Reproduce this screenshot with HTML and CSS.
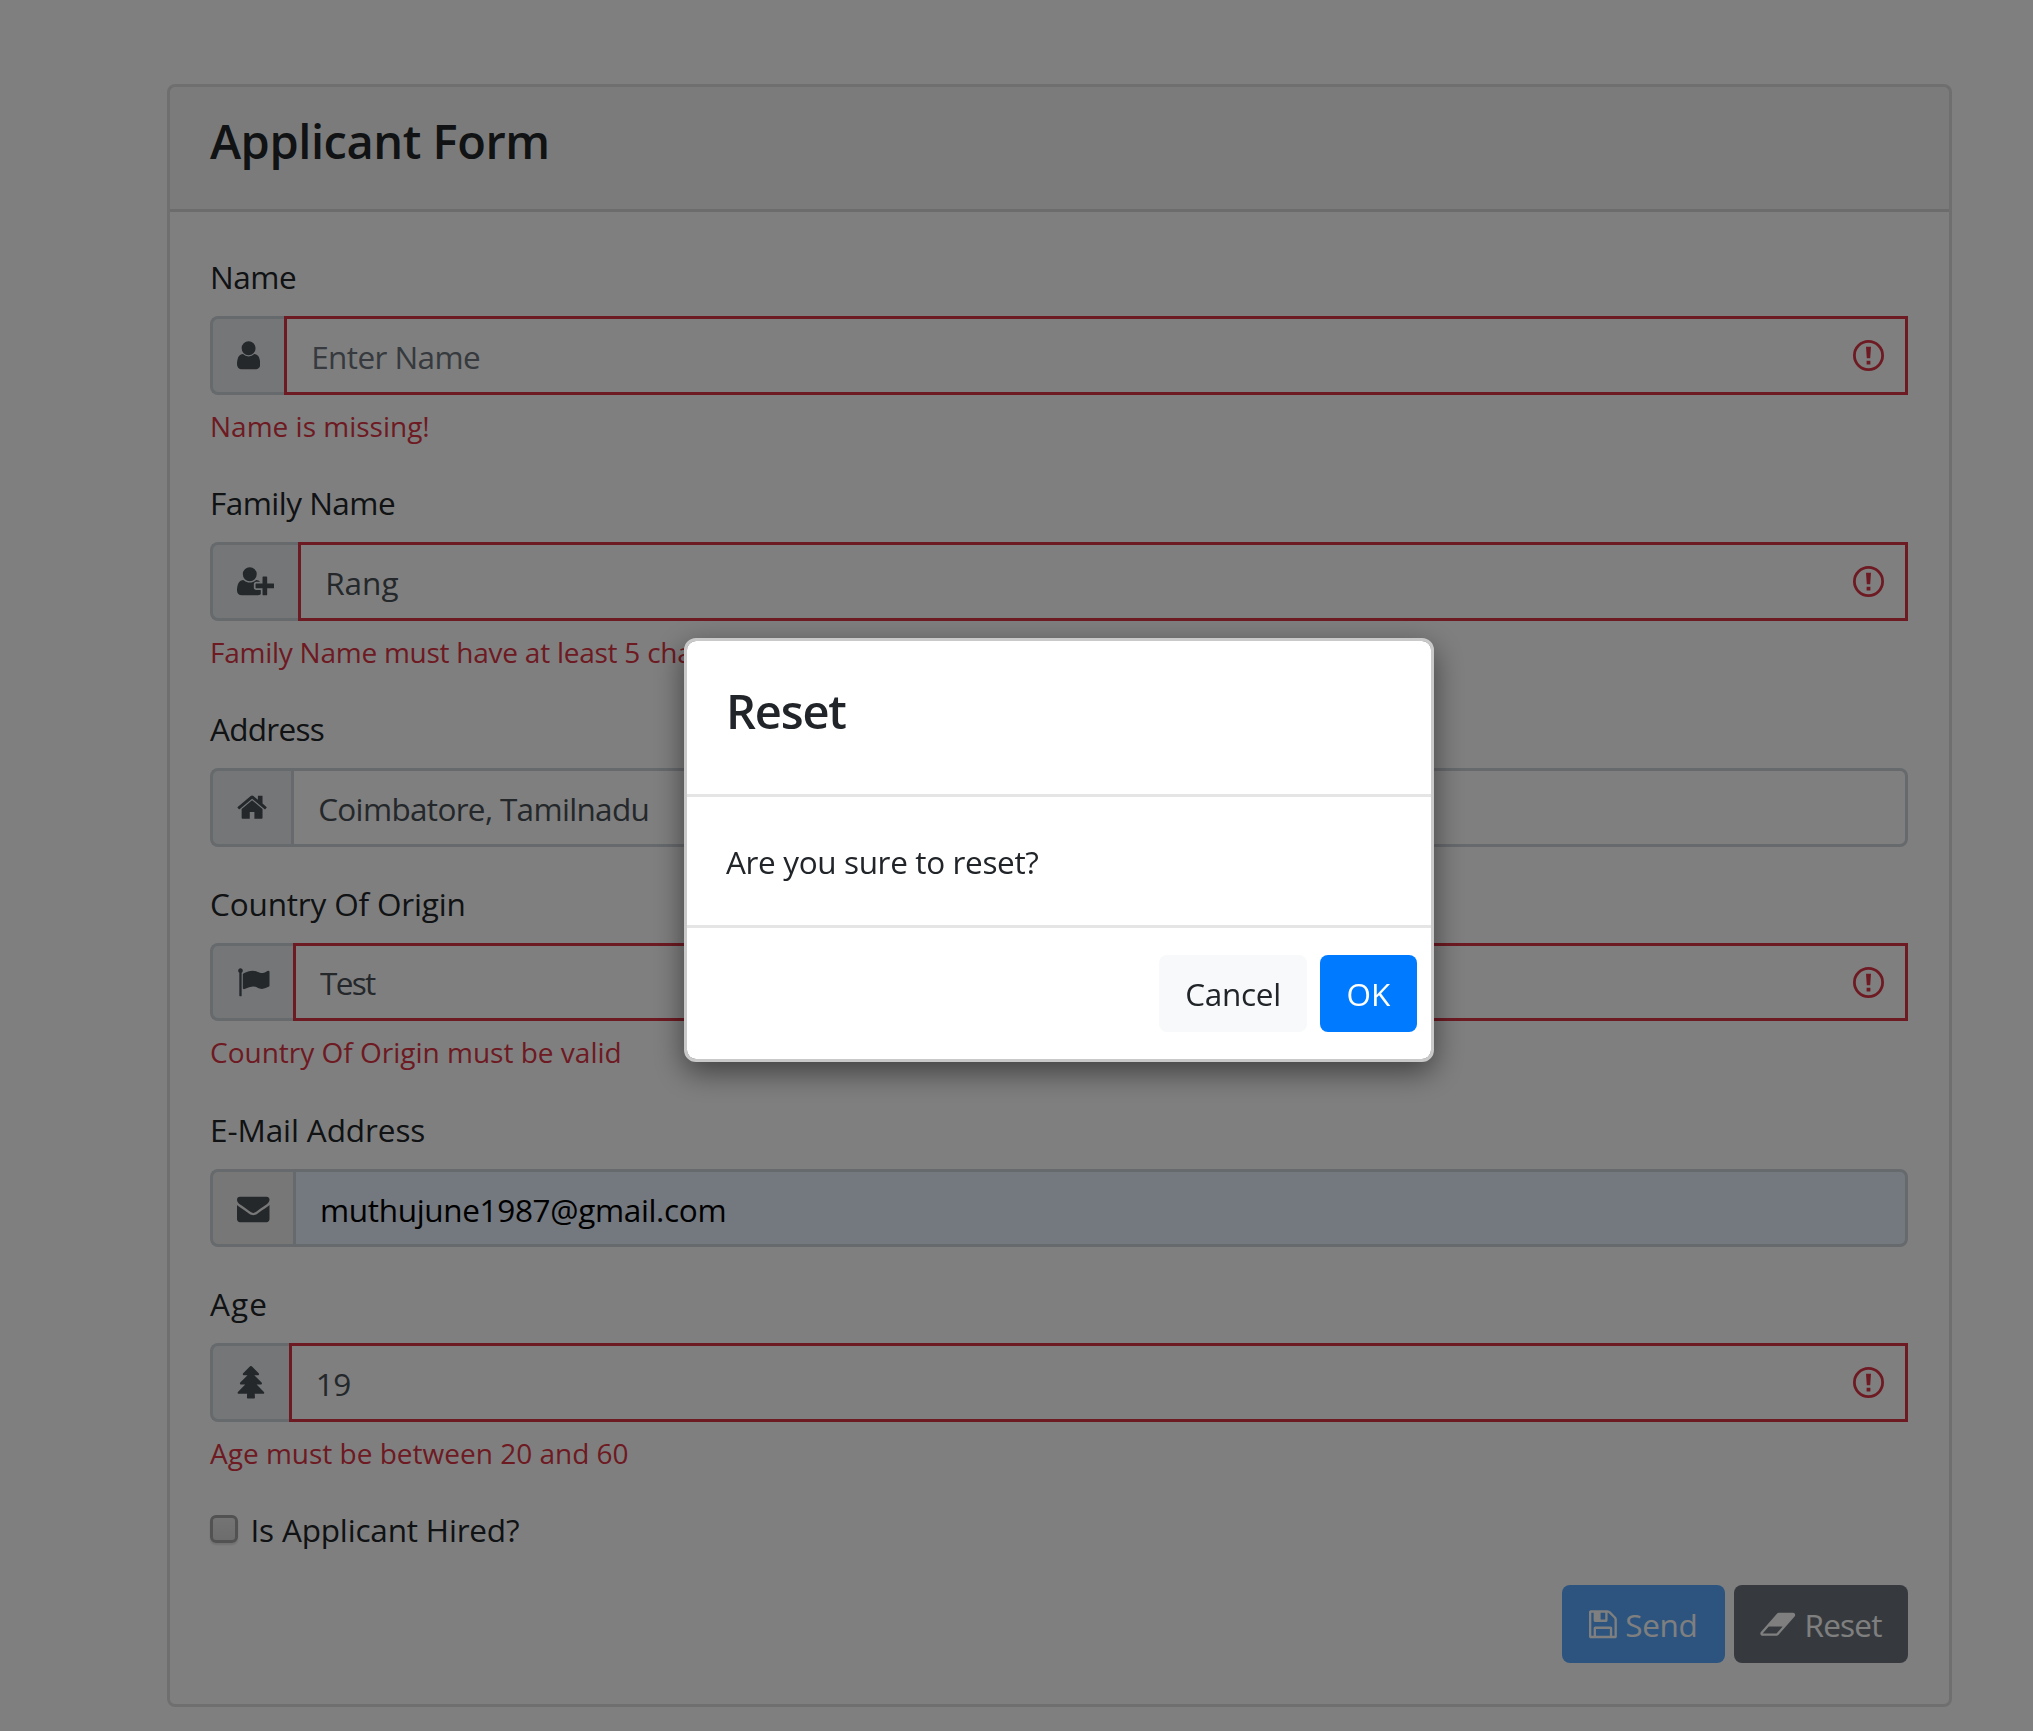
FILE: index.html
```html
<!DOCTYPE html>
<html lang="en">
<head>
<meta charset="utf-8">
<title>Applicant Form</title>
<link rel="stylesheet" href="styles.css">
</head>
<body>
<svg class="sprite" aria-hidden="true">
  <symbol id="alert" viewBox="0 0 31 31"><circle cx="15.5" cy="15.5" r="14.1" fill="none" stroke="currentColor" stroke-width="2.8"/><path fill="currentColor" d="M13 6.7h5l-.8 11.6h-3.4zM13.6 20.8h3.8v3.6h-3.8z"/></symbol>
</svg>
<main class="card">
  <header class="card-header"><h2 class="card-title">Applicant Form</h2></header>
  <form class="card-body">
    <div class="form-group">
      <label class="label t-name" for="name">Name</label>
      <div class="input-group invalid">
        <span class="addon"><svg class="icon" viewBox="256 0 1280 1792"><path d="M1536 1399q0 109-62.5 187t-150.5 78h-854q-88 0-150.5-78t-62.5-187q0-85 8.5-160.5t31.5-152 58.5-131 94-89 134.5-34.5q131 128 313 128t313-128q76 0 134.5 34.5t94 89 58.5 131 31.5 152 8.5 160.5zm-256-887q0 159-112.5 271.5t-271.5 112.5-271.5-112.5-112.5-271.5 112.5-271.5 271.5-112.5 271.5 112.5 112.5 271.5z"/></svg></span>
        <input class="control t-enter" id="name" type="text" placeholder="Enter Name">
        <svg class="alert"><use href="#alert"/></svg>
      </div>
      <div class="feedback">Name is missing!</div>
    </div>
    <div class="form-group">
      <label class="label t-family" for="family">Family Name</label>
      <div class="input-group invalid">
        <span class="addon"><svg class="icon" viewBox="0 0 2048 1792"><path d="M704 896q-159 0-271.5-112.5t-112.5-271.5 112.5-271.5 271.5-112.5 271.5 112.5 112.5 271.5-112.5 271.5-271.5 112.5zm960 128h352q13 0 22.5 9.5t9.5 22.5v192q0 13-9.5 22.5t-22.5 9.5h-352v352q0 13-9.5 22.5t-22.5 9.5h-192q-13 0-22.5-9.5t-9.5-22.5v-352h-352q-13 0-22.5-9.5t-9.5-22.5v-192q0-13 9.5-22.5t22.5-9.5h352v-352q0-13 9.5-22.5t22.5-9.5h192q13 0 22.5 9.5t9.5 22.5v352zm-736 224q0 52 38 90t90 38h256v238q-68 50-171 50h-874q-121 0-194-69t-73-190q0-53 3.5-103.5t14-109 26.5-108.5 43-97.5 62-81 85.5-53.5 111.5-20q19 0 39 17 79 61 154.5 91.5t164.5 30.5 164.5-30.5 154.5-91.5q20-17 39-17 132 0 217 96h-223q-52 0-90 38t-38 90v192z"/></svg></span>
        <input class="control t-rang" id="family" type="text" value="Rang">
        <svg class="alert"><use href="#alert"/></svg>
      </div>
      <div class="feedback t-length">Family Name must have at least 5 characters</div>
    </div>
    <div class="form-group">
      <label class="label t-address" for="address">Address</label>
      <div class="input-group">
        <span class="addon"><svg class="icon" viewBox="64 0 1664 1792"><path d="M1472 992v480q0 26-19 45t-45 19h-384v-384h-256v384h-384q-26 0-45-19t-19-45v-480q0-1 .5-3t.5-3l575-474 575 474q1 2 1 6zm223-69l-62 74q-8 9-21 11h-3q-13 0-21-7l-692-577-692 577q-12 8-24 7-13-2-21-11l-62-74q-8-10-7-23.5t11-21.5l719-599q32-26 76-26t76 26l244 204v-195q0-14 9-23t23-9h192q14 0 23 9t9 23v408l219 182q10 8 11 21.5t-7 23.5z"/></svg></span>
        <input class="control t-city" id="address" type="text" value="Coimbatore, Tamilnadu">
      </div>
    </div>
    <div class="form-group">
      <label class="label t-country" for="country">Country Of Origin</label>
      <div class="input-group invalid">
        <span class="addon addon-wide"><svg class="icon" viewBox="0 0 1792 1792"><path d="M320 256q0 72-64 110v1266q0 13-9.5 22.5t-22.5 9.5h-64q-13 0-22.5-9.5t-9.5-22.5v-1266q-64-38-64-110 0-53 37.5-90.5t90.5-37.5 90.5 37.5 37.5 90.5zm1472 64v763q0 25-12.5 38.5t-39.5 27.5q-215 116-369 116-61 0-123.5-22t-108.5-48-115.5-48-142.5-22q-192 0-464 146-17 9-33 9-26 0-45-19t-19-45v-742q0-32 31-55 21-14 79-43 236-120 421-120 107 0 200 29t219 88q38 19 88 19 54 0 117.5-21t110-47 88-47 54.5-21q26 0 45 19t19 45z"/></svg></span>
        <input class="control t-test" id="country" type="text" value="Test">
        <svg class="alert"><use href="#alert"/></svg>
      </div>
      <div class="feedback">Country Of Origin must be valid</div>
    </div>
    <div class="form-group">
      <label class="label t-mail" for="email">E-Mail Address</label>
      <div class="input-group">
        <span class="addon addon-wide addon-plain"><svg class="icon" viewBox="0 0 1792 1792"><path d="M1792 710v794q0 66-47 113t-113 47h-1472q-66 0-113-47t-47-113v-794q44 49 101 87 362 246 497 345 57 42 92.5 65.5t94.5 48 110 24.5h2q51 0 110-24.5t94.5-48 92.5-65.5q170-123 498-345 57-39 100-87zm0-294q0 79-49 151t-122 123q-376 261-468 325-10 7-42.5 31t-54 38.5-52 32.5-57.5 27-50 9h-2q-23 0-50-9t-57.5-27-52-32.5-54-38.5-42.5-31q-91-64-262-182.5t-205-142.5q-62-42-117-115.5t-55-136.5q0-78 41.5-130t118.5-52h1472q65 0 112.5 47t47.5 113z"/></svg></span>
        <input class="control autofilled t-email" id="email" type="text" value="muthujune1987@gmail.com">
      </div>
    </div>
    <div class="form-group">
      <label class="label t-age" for="age">Age</label>
      <div class="input-group invalid">
        <span class="addon"><svg class="icon" viewBox="0 0 1536 1792"><path d="M1504 1472q0 26-19 45t-45 19h-462q1 17 6 87.5t5 108.5q0 25-18 42.5t-43 17.5h-320q-25 0-43-17.5t-18-42.5q0-38 5-108.5t6-87.5h-462q-26 0-45-19t-19-45 19-45l402-403h-229q-26 0-45-19t-19-45 19-45l402-403h-197q-26 0-45-19t-19-45 19-45l384-384q19-19 45-19t45 19l384 384q19 19 19 45t-19 45-45 19h-197l402 403q19 19 19 45t-19 45-45 19h-229l402 403q19 19 19 45z"/></svg></span>
        <input class="control t-num" id="age" type="text" value="19">
        <svg class="alert"><use href="#alert"/></svg>
      </div>
      <div class="feedback">Age must be between 20 and 60</div>
    </div>
    <div class="check-row">
      <input class="check" id="hired" type="checkbox">
      <label class="check-label" for="hired">Is Applicant Hired?</label>
    </div>
    <div class="actions">
      <button class="btn btn-send" type="button" disabled><svg class="icon" viewBox="128 0 1536 1792"><path d="M512 1536h768v-384h-768v384zm896 0h128v-896q0-14-10-38.5t-20-34.5l-281-281q-10-10-34-20t-39-10v416q0 40-28 68t-68 28h-576q-40 0-68-28t-28-68v-416h-128v1280h128v-416q0-40 28-68t68-28h832q40 0 68 28t28 68v416zm-384-928v-320q0-13-9.5-22.5t-22.5-9.5h-192q-13 0-22.5 9.5t-9.5 22.5v320q0 13 9.5 22.5t22.5 9.5h192q13 0 22.5-9.5t9.5-22.5zm640 32v928q0 40-28 68t-68 28h-1344q-40 0-68-28t-28-68v-1344q0-40 28-68t68-28h928q40 0 88 20t76 48l280 280q28 28 48 76t20 88z"/></svg><span class="btn-text t-send">Send</span></button>
      <button class="btn btn-reset" type="button"><svg class="icon" viewBox="0 0 2048 1792"><path d="M1024 1408l336-384h-768l-336 384h768zm1013-1077q15 34 9.5 71.5t-30.5 65.5l-896 1024q-38 44-96 44h-768q-38 0-69.5-20.5t-47.5-54.5q-15-34-9.5-71.5t30.5-65.5l896-1024q38-44 96-44h768q38 0 69.5 20.5t47.5 54.5z"/></svg><span class="btn-text t-reset">Reset</span></button>
    </div>
  </form>
</main>
<div class="backdrop">
  <section class="modal" role="dialog">
    <header class="modal-header"><h2 class="modal-title">Reset</h2></header>
    <p class="modal-body">Are you sure to reset?</p>
    <footer class="modal-footer">
      <button class="btn btn-cancel" type="button">Cancel</button>
      <button class="btn btn-ok" type="button">OK</button>
    </footer>
  </section>
</div>
</body>
</html>
```
FILE: styles.css
```css
* { box-sizing: border-box; }
html { overflow: hidden; }
body {
  margin: 0;
  padding: 84px 81px 24px 167px;
  background: #fff;
  color: #212529;
  font: 400 31.5px/49px "Open Sans", "Noto Sans", sans-serif;
  height: 1731px;
}
h2, p { margin: 0; font-weight: 600; }
.sprite { display: none; }

/* Card */
.card {
  width: 1785px;
  height: 1623px;
  border: 3px solid rgba(0, 0, 0, .125);
  border-radius: 8px;
}
.card-header {
  height: 125px;
  padding: 25px 40px 0;
  background: rgba(0, 0, 0, .03);
  border-bottom: 3px solid rgba(0, 0, 0, .125);
}
.card-title, .modal-title {
  font-size: 47px;
  line-height: 59px;
  letter-spacing: -.45px;
}
.card-body { padding: 39.9px 41px 0 40px; }

/* Fields */
.form-group { margin-bottom: 31.8px; }
.label {
  display: block;
  height: 48.7px;
  margin-bottom: 15.5px;
}
.input-group { position: relative; display: flex; height: 78.5px; }
.addon {
  display: flex;
  align-items: center;
  padding: 0 24px;
  background: #e9ecef;
  border: 3px solid #ced4da;
  border-right: 0;
  border-radius: 8px 0 0 8px;
  color: #495057;
}
.addon-wide { padding-right: 23.5px; }
.addon-plain { background: #eee; }
.icon { display: block; height: 32.5px; fill: currentColor; }
.control {
  flex: 1;
  min-width: 0;
  padding: 2px 24px 0;
  background: #fff;
  border: 3px solid #ced4da;
  border-radius: 0 8px 8px 0;
  color: #495057;
  font: inherit;
}
.control::placeholder { color: #6c757d; opacity: 1; }
.autofilled { background: #e8f0fe; color: #000; }
.invalid .control { border-color: #dc3545; border-radius: 0; }
.alert {
  position: absolute;
  right: 24px;
  top: 24px;
  width: 31px;
  height: 31px;
  color: #dc3545;
}
.feedback {
  height: 43.6px;
  margin-top: 8px;
  padding-top: 2px;
  color: #dc3545;
  font-size: 28px;
  line-height: 43px;
  white-space: nowrap;
}

/* Checkbox and buttons */
.check-row { display: flex; height: 48px; margin-bottom: 32px; }
.check {
  appearance: none;
  width: 28px;
  height: 28px;
  margin: 10px 12.5px 0 0;
  border: 3px solid #a4a4a4;
  border-radius: 6px;
  background: linear-gradient(#e8e8e8, #dadada);
  box-shadow: 0 2px 2px rgba(0, 0, 0, .12);
}
.check-label { letter-spacing: -.18px; }
.actions { display: flex; justify-content: flex-end; gap: 9px; }
.btn {
  display: flex;
  align-items: center;
  justify-content: center;
  height: 78px;
  padding: 0;
  border: 0;
  border-radius: 8px;
  color: #fff;
  font: inherit;
}
.btn-text { padding-top: 1px; }
.btn-send { width: 163px; gap: 8px; background: #007bff; opacity: .65; }
.btn-reset { width: 174px; padding-right: 2px; gap: 9px; background: #6c757d; }

/* Modal */
.backdrop {
  position: fixed;
  inset: 0;
  padding: 638px 0 0 684px;
  background: rgba(0, 0, 0, .5);
}
.modal {
  width: 750px;
  height: 424px;
  background: #fff;
  background-clip: padding-box;
  border: 3px solid #c9c9c9;
  border-radius: 12px;
  box-shadow: 0 10px 30px rgba(0, 0, 0, .5);
}
.modal-header { height: 156px; padding: 41px 39px 0; border-bottom: 3px solid #e5e5e5; }
.modal-title { letter-spacing: -1.2px; }
.modal-body {
  height: 128px;
  padding: 40px 39px 0;
  font-weight: 400;
  letter-spacing: -.36px;
}
.modal-footer {
  display: flex;
  justify-content: flex-end;
  gap: 13px;
  padding: 27px 14px 0 0;
  border-top: 3px solid #e5e5e5;
}
.btn-cancel { width: 148px; height: 77px; background: #f8f9fa; color: #212529; letter-spacing: -.3px; }
.btn-ok { width: 97px; height: 77px; background: #007bff; }

/* Tracking */
.t-name { letter-spacing: -.5px; }
.t-family { letter-spacing: -.52px; }
.t-length { letter-spacing: -.25px; }
.t-enter { letter-spacing: -.6px; }
.t-rang { letter-spacing: 0; }
.t-address { letter-spacing: -.7px; }
.t-city { letter-spacing: -.67px; }
.t-country { letter-spacing: -.16px; }
.t-test { letter-spacing: -1.7px; }
.t-mail { letter-spacing: -.1px; }
.t-email { letter-spacing: -.34px; }
.t-age { letter-spacing: 1.1px; }
.t-num { letter-spacing: -.5px; }
.t-send { letter-spacing: -.3px; }
.t-reset { letter-spacing: -.8px; }
```
